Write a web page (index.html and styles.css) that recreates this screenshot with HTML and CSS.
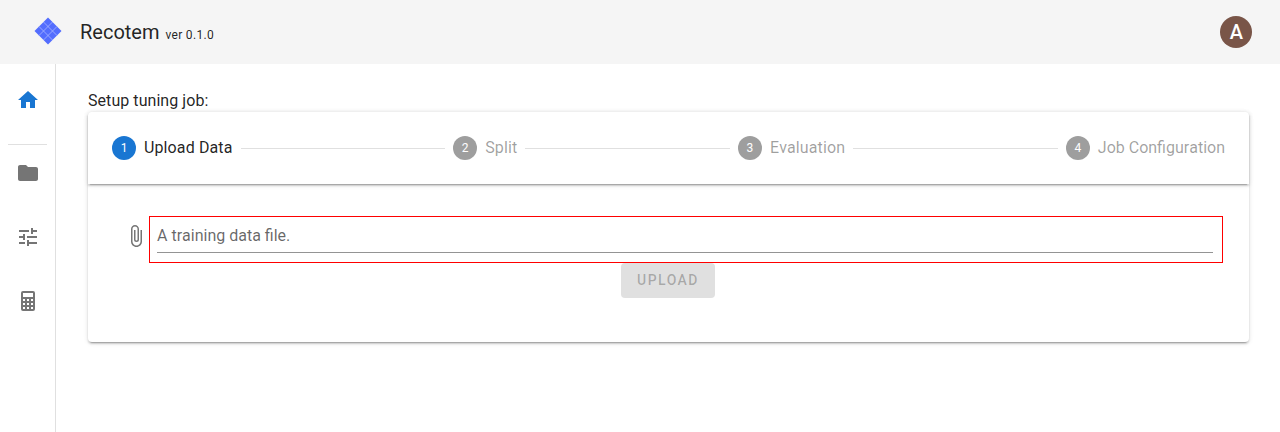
FILE: index.html
```html
<!DOCTYPE html>
<html lang="en">
<head>
<meta charset="utf-8">
<title>Recotem</title>
<link rel="stylesheet" href="styles.css">
</head>
<body>
<header class="appbar">
  <svg class="logo" width="32" height="32" viewBox="0 0 32 32">
    <path class="logo-fill" d="M16 2.5 29.5 16 16 29.500 2.500 16Z"/>
    <path class="logo-grid" d="M11.500 7 25 20.500M7 11.500 20.500 25M20.500 7 7 20.500M25 11.500 11.500 25"/>
  </svg>
  <div class="brand">Recotem <span class="version">ver 0.1.0</span></div>
  <div class="spacer"></div>
  <div class="avatar">A</div>
</header>
<div class="layout">
  <nav class="sidebar">
    <div class="nav-item nav-home">
      <svg class="icon active" viewBox="0 0 24 24"><path d="M10 20v-6h4v6h5v-8h3L12 3 2 12h3v8z"/></svg>
    </div>
    <hr class="nav-divider">
    <div class="nav-item">
      <svg class="icon" viewBox="0 0 24 24"><path d="M10 4H4c-1.100 0-1.990.9-1.990 2L2 18c0 1.100.9 2 2 2h16c1.100 0 2-.9 2-2V8c0-1.100-.9-2-2-2h-8l-2-2z"/></svg>
    </div>
    <div class="nav-item">
      <svg class="icon" viewBox="0 0 24 24"><path d="M3 17v2h6v-2H3zM3 5v2h10V5H3zm10 16v-2h8v-2h-8v-2h-2v6h2zM7 9v2H3v2h4v2h2V9H7zm14 4v-2H11v2h10zm-6-4h2V7h4V5h-4V3h-2v6z"/></svg>
    </div>
    <div class="nav-item">
      <svg class="icon" viewBox="0 0 24 24"><path d="M7 2h10a2 2 0 0 1 2 2v16a2 2 0 0 1-2 2H7a2 2 0 0 1-2-2V4a2 2 0 0 1 2-2zm0 2v4h10V4H7zm0 6v2h2v-2H7zm4 0v2h2v-2h-2zm4 0v2h2v-2h-2zm-8 4v2h2v-2H7zm4 0v2h2v-2h-2zm4 0v2h2v-2h-2zm-8 4v2h2v-2H7zm4 0v2h2v-2h-2zm4 0v2h2v-2h-2z"/></svg>
    </div>
  </nav>
  <main class="main">
    <div class="page-title">Setup tuning job:</div>
    <section class="card">
      <div class="stepper">
        <div class="step current"><span class="step-num">1</span><span class="step-label">Upload Data</span></div>
        <div class="connector"></div>
        <div class="step"><span class="step-num">2</span><span class="step-label">Split</span></div>
        <div class="connector"></div>
        <div class="step"><span class="step-num">3</span><span class="step-label">Evaluation</span></div>
        <div class="connector"></div>
        <div class="step"><span class="step-num">4</span><span class="step-label">Job Configuration</span></div>
      </div>
      <div class="card-body">
        <div class="file-row">
          <svg class="clip" viewBox="0 0 24 24"><path d="M16.500 6v11.500c0 2.210-1.790 4-4 4s-4-1.790-4-4V5a2.500 2.500 0 0 1 5 0v10.500c0 .55-.45 1-1 1s-1-.45-1-1V6H10v9.500a2.500 2.500 0 0 0 5 0V5c0-2.210-1.790-4-4-4S7 2.790 7 5v12.500c0 3.040 2.460 5.500 5.500 5.500s5.500-2.460 5.500-5.500V6h-1.500z"/></svg>
          <div class="file-box">
            <div class="file-field">A training data file.</div>
          </div>
        </div>
        <div class="actions"><button class="upload" disabled>Upload</button></div>
      </div>
    </section>
  </main>
</div>
</body>
</html>
```
FILE: styles.css
```css
* { box-sizing: border-box; }
html, body { height: 100%; }
body {
  margin: 0;
  font-family: Roboto, "Liberation Sans", sans-serif;
  color: rgba(0, 0, 0, .87);
  background: #fff;
  overflow: hidden;
  font-kerning: none;
  -webkit-font-smoothing: antialiased;
}
.appbar {
  height: 64px;
  background: #f5f5f5;
  display: flex;
  align-items: center;
  padding: 0 28px 0 32px;
}
.logo { display: block; margin-bottom: 2px; flex: none; }
.logo-fill { fill: #536dfe; }
.logo-grid { fill: none; stroke: #a9b6ff; stroke-width: .8; }
.brand {
  margin-left: 16px;
  font-size: 20px;
  line-height: 1;
  margin-bottom: 1px;
}
.version { font-size: 12px; margin-left: 1px; letter-spacing: .3px; }
.spacer { flex: 1; }
.avatar {
  width: 32px;
  height: 32px;
  border-radius: 50%;
  background: #795548;
  color: #fff;
  font-size: 20px;
  font-weight: 500;
  padding-left: 1px;
  display: flex;
  align-items: center;
  justify-content: center;
}
.layout { display: flex; height: 368px; }
.sidebar {
  width: 56px;
  flex: none;
  border-right: 1px solid #e0e0e0;
  padding: 4px 8px 0;
}
.nav-item {
  height: 64px;
  display: flex;
  align-items: center;
  justify-content: center;
}
.nav-home { height: 64px; }
.icon { width: 24px; height: 24px; fill: #757575; display: block; }
.icon.active { fill: #1976d2; }
.nav-divider {
  border: 0;
  border-top: 1px solid #e0e0e0;
  margin: 12px 0 -4px;
}
.main { flex: 1; padding: 26px 31px 0 32px; min-width: 0; }
.page-title { font-size: 16px; line-height: 22px; letter-spacing: .06px; }
.card {
  background: #fff;
  border-radius: 4px;
  height: 230px;
  box-shadow: 0 3px 1px -2px rgba(0,0,0,.2), 0 2px 2px 0 rgba(0,0,0,.14), 0 1px 5px 0 rgba(0,0,0,.12);
}
.stepper {
  height: 72px;
  display: flex;
  align-items: center;
  padding: 0 24px;
  border-radius: 4px 4px 0 0;
  box-shadow: 0 3px 1px -2px rgba(0,0,0,.2), 0 2px 2px 0 rgba(0,0,0,.14), 0 1px 5px 0 rgba(0,0,0,.12);
}
.step { display: flex; align-items: center; flex: none; }
.step-num {
  width: 24px;
  height: 24px;
  border-radius: 50%;
  background: #9e9e9e;
  color: #fff;
  font-size: 12px;
  padding-bottom: 1px;
  display: flex;
  align-items: center;
  justify-content: center;
  margin-right: 8px;
}
.step-label { font-size: 16px; padding-bottom: 2px; letter-spacing: .12px; color: rgba(0,0,0,.38); }
.step:last-child .step-label { letter-spacing: 0; }
.step.current .step-num { background: #1976d2; }
.step.current .step-label { color: rgba(0,0,0,.87); }
.connector { flex: 1; margin: 0 8px; border-top: 1px solid #e0e0e0; }
.card-body { padding-top: 32px; }
.file-row { display: flex; align-items: center; padding-left: 36px; padding-right: 26px; }
.clip { width: 24px; height: 24px; fill: #757575; flex: none; margin: 0 1px 7px 0; }
.file-box {
  flex: 1;
  height: 47px;
  border: 1px solid #f00;
  padding: 0 9px 0 7px;
}
.file-field {
  height: 36px;
  border-bottom: 1px solid #949494;
  font-size: 16px;
  line-height: 38px;
  color: rgba(0,0,0,.6);
}
.actions { display: flex; justify-content: center; }
.upload {
  height: 35px;
  width: 94px;
  margin-right: 2px;
  border: 0;
  border-radius: 4px;
  background: #e0e0e0;
  color: rgba(0,0,0,.26);
  font-family: inherit;
  font-size: 14px;
  font-weight: 500;
  letter-spacing: 1.45px;
  text-transform: uppercase;
  padding: 0 0 1px 1px;
}
```
